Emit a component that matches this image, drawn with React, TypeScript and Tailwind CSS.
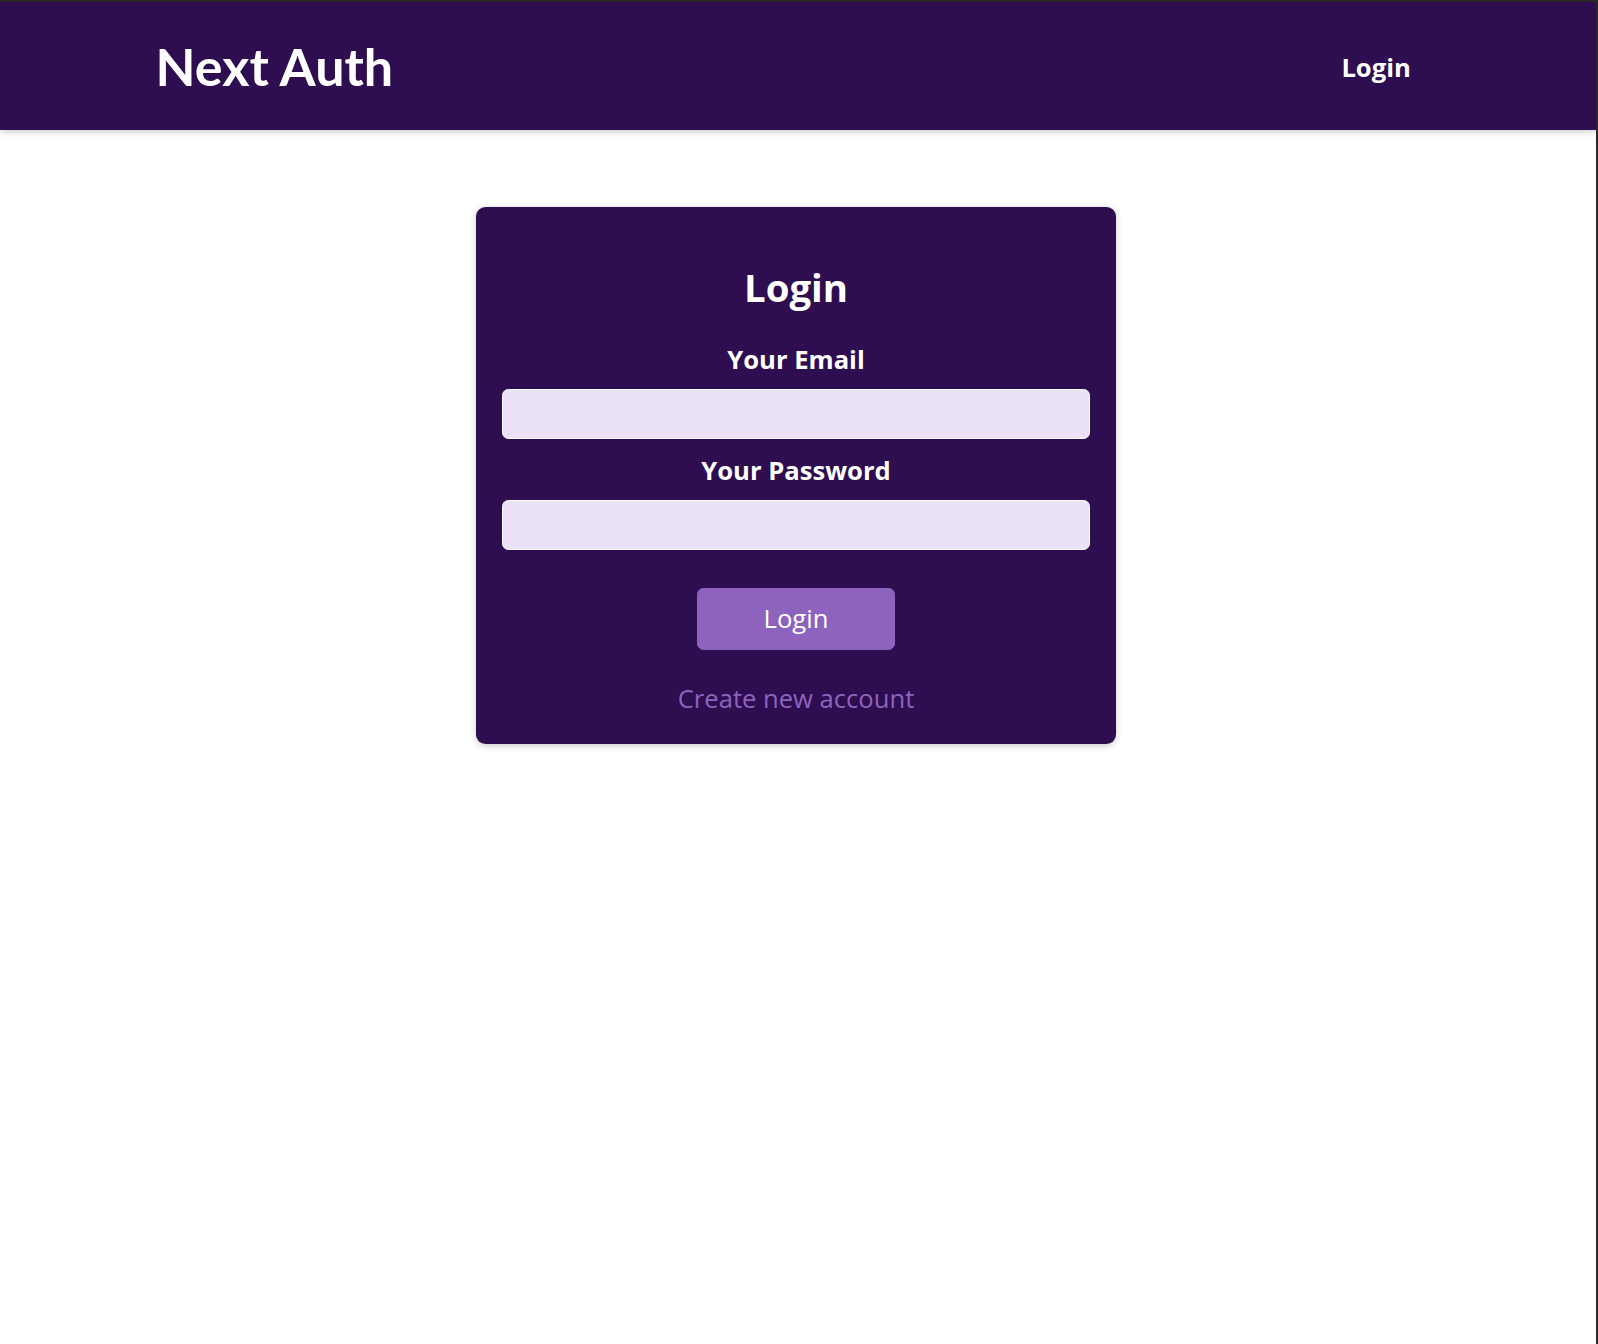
export default function App() {
  return (
    <div className="min-h-screen border-t-2 border-r-2 border-[#2a2a2a] bg-white font-['Open_Sans',sans-serif] text-[25.6px] leading-[34.9px]">
      <header className="flex h-[128px] w-full items-center justify-between bg-[#2e0d51] px-[10%] shadow-[0_1.6px_6.4px_rgba(0,0,0,0.2)]">
        <div className="m-0 -ml-[4px] font-['Lato',sans-serif] text-[52px] leading-[62px] font-bold text-white">
          Next Auth
        </div>
        <nav className="mt-[4px]">
          <ul className="m-0 flex list-none items-baseline p-0">
            <li className="mx-[25.6px]">
              <a href="/auth" className="font-bold text-white no-underline">
                Login
              </a>
            </li>
          </ul>
        </nav>
      </header>

      <main className="pr-[4px]">
        <section className="mx-auto my-[76.8px] w-[95%] max-w-[640px] rounded-[9.6px] bg-[#2e0d51] p-[25.6px] text-center shadow-[0_1.6px_6.4px_rgba(0,0,0,0.2)]">
          <h1 className="mt-[28.4px] mb-[28px] text-[38.4px] leading-[52.3px] font-bold text-white">
            Login
          </h1>
          <form onSubmit={(e) => e.preventDefault()}>
            <div className="mb-[12.8px]">
              <label htmlFor="email" className="mb-[10.8px] block pt-[2px] font-bold text-white">
                Your Email
              </label>
              <input
                id="email"
                type="email"
                className="block h-[50.4px] w-full rounded-[6.4px] border-[1.6px] border-white bg-[#ebe2f7] px-[6.4px] text-left text-[#2e0d51] outline-none"
              />
            </div>
            <div className="mb-[12.8px]">
              <label htmlFor="password" className="mb-[10.8px] block pt-[2px] font-bold text-white">
                Your Password
              </label>
              <input
                id="password"
                type="password"
                className="block h-[50.4px] w-full rounded-[6.4px] border-[1.6px] border-white bg-[#ebe2f7] px-[6.4px] text-left text-[#2e0d51] outline-none"
              />
            </div>
            <div className="mt-[38.4px] flex flex-col items-center">
              <button className="h-[62px] cursor-pointer rounded-[6.4px] border-[1.6px] border-[#8e63bd] bg-[#8e63bd] px-[65.6px] text-white">
                Login
              </button>
              <button
                type="button"
                className="mt-[27.6px] cursor-pointer border-none bg-transparent px-[38.4px] pt-[3.84px] pb-[1.84px] text-[#8e63bd]"
              >
                Create new account
              </button>
            </div>
          </form>
        </section>
      </main>
    </div>
  );
}
